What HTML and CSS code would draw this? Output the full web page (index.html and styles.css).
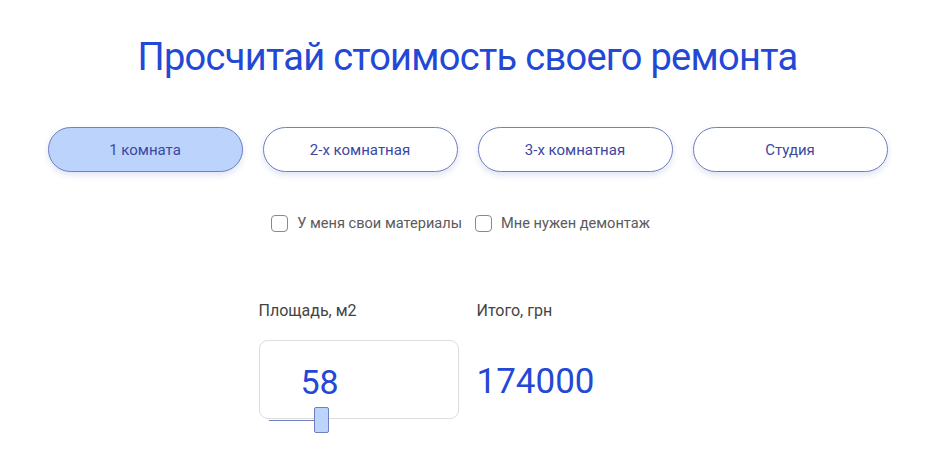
FILE: index.html
```html
<!DOCTYPE html>
<html lang="ru">
<head>
  <meta charset="UTF-8">
  <meta name="viewport" content="width=device-width, initial-scale=1.0">
  <title>Калькулятор ремонта</title>
  <link rel="stylesheet" href="styles.css">
</head>
<body>
<div id="calc">
  <h1 class="calc-title">Просчитай стоимость своего ремонта</h1>

  <div class="room-tabs">
    <button class="room-btn active">1 комната</button>
    <button class="room-btn">2-х комнатная</button>
    <button class="room-btn">3-х комнатная</button>
    <button class="room-btn">Студия</button>
  </div>

  <div class="options">
    <label class="option"><span class="box"></span>У меня свои материалы</label>
    <label class="option"><span class="box"></span>Мне нужен демонтаж</label>
  </div>

  <div class="result">
    <div class="field">
      <div class="field-label">Площадь, м2</div>
      <div class="area-box">
        <span class="area-value">58</span>
      </div>
      <div class="slider">
        <span class="track"></span>
        <span class="thumb"></span>
      </div>
    </div>
    <div class="field">
      <div class="field-label">Итого, грн</div>
      <div class="total">174000</div>
    </div>
  </div>
</div>
</body>
</html>
```

FILE: styles.css
```css
body {
  font-family: 'Roboto', 'Noto Sans', sans-serif;
  background-color: #ffffff;
  margin: 0;
  min-height: 471px;
}

#calc {
  width: 840px;
  margin: 0 auto;
  padding-top: 31px;
  padding-bottom: 30px;
}

.calc-title {
  font-size: 38px;
  font-weight: 400;
  letter-spacing: -0.7px;
  color: #2448d6;
  text-align: center;
  margin: 0;
  line-height: 52px;
}

.room-tabs {
  display: flex;
  gap: 20px;
  margin-top: 44px;
}

.room-btn {
  flex: 1;
  height: 45px;
  border: 1px solid #6f7fbf;
  border-radius: 23px;
  background-color: #ffffff;
  color: #3b47a3;
  font-family: inherit;
  font-size: 15px;
  box-shadow: 0 3px 6px rgba(80, 100, 190, 0.18);
  cursor: pointer;
}

.room-btn.active {
  background-color: #bcd4fb; /* light blue selected */
}

.options {
  display: flex;
  justify-content: center;
  gap: 13px;
  margin-top: 42px;
  padding-right: 14px;
}

.option {
  display: flex;
  align-items: center;
  gap: 9px;
  font-size: 14.6px;
  color: #5a5a5a;
}

.box {
  width: 15px;
  height: 15px;
  border: 1px solid #8a8a8a;
  border-radius: 4px;
}

.result {
  display: flex;
  gap: 18px;
  margin-top: 69px;
  padding-left: 211px;
}

.field-label {
  font-size: 16px;
  color: #444444;
  height: 20px;
}

.area-box {
  width: 198px;
  height: 77px;
  margin-top: 19px;
  border: 1px solid #dddddd;
  border-radius: 9px;
}

.area-value {
  display: block;
  padding: 21px 0 0 41px;
  font-size: 34px;
  color: #2448d6;
}

/* range slider sits across the bottom edge of the box */
.slider {
  display: flex;
  align-items: center;
  height: 26px;
  margin-top: -12px;
  padding-left: 10px;
}

.track {
  width: 45px;
  height: 1px;
  background-color: #6f7fbf;
}

.thumb {
  width: 13px;
  height: 24px;
  background-color: #bcd4fb;
  border: 1px solid #6f7fbf;
  border-radius: 2px;
}

.total {
  margin-top: 40px;
  font-size: 35px;
  color: #2448d6;
}
```
